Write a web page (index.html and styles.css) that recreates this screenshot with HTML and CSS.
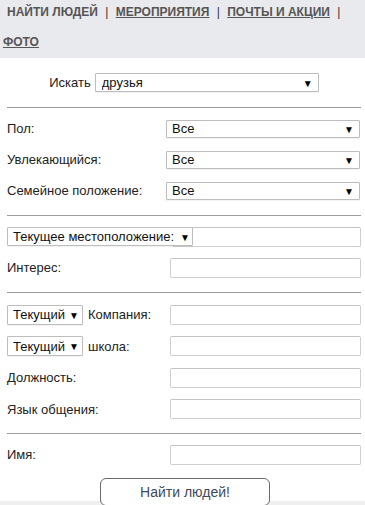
FILE: index.html
```
<!DOCTYPE html>
<html lang="ru">
<head>
    <meta charset="UTF-8">
    <meta name="viewport" content="width=device-width, initial-scale=1.0">
    <title>Найти людей</title>
    <link rel="stylesheet" href="styles.css">
</head>
<body>
    <header class="topnav">
        <nav class="topnav-links">
            <span class="current">Найти людей</span> <span class="sep">|</span> <a href="#">Мероприятия</a> <span class="sep">|</span> <a href="#">Почты и акции</a> <span class="sep">|</span> <a href="#">Фото</a>
        </nav>
    </header>
    <form class="search-form">
        <div class="search-row">
            <label for="what">Искать</label>
            <span class="select select-what">
                <select id="what">
                    <option>друзья</option>
                </select>
            </span>
        </div>

        <div class="rule rule-1"></div>

        <div class="section section-1">
            <div class="field">
                <label for="sex">Пол:</label>
                <span class="select select-wide"><select id="sex"><option>Все</option></select></span>
            </div>
            <div class="field">
                <label for="hobby">Увлекающийся:</label>
                <span class="select select-wide"><select id="hobby"><option>Все</option></select></span>
            </div>
            <div class="field">
                <label for="family">Семейное положение:</label>
                <span class="select select-wide"><select id="family"><option>Все</option></select></span>
            </div>
        </div>

        <div class="rule rule-2"></div>

        <div class="section section-2">
            <div class="field">
                <span class="select select-location"><select><option>Текущее местоположение:</option></select></span>
                <input type="text" class="text location-input">
            </div>
            <div class="field">
                <label for="interest">Интерес:</label>
                <input type="text" id="interest" class="text">
            </div>
        </div>

        <div class="rule rule-3"></div>

        <div class="section section-3">
            <div class="field">
                <span class="label-group">
                    <span class="select select-small"><select><option>Текущий</option></select></span>
                    <label for="company">Компания:</label>
                </span>
                <input type="text" id="company" class="text">
            </div>
            <div class="field">
                <span class="label-group">
                    <span class="select select-small"><select><option>Текущий</option></select></span>
                    <label for="school">школа:</label>
                </span>
                <input type="text" id="school" class="text">
            </div>
            <div class="field">
                <label for="position">Должность:</label>
                <input type="text" id="position" class="text">
            </div>
            <div class="field">
                <label for="lang">Язык общения:</label>
                <input type="text" id="lang" class="text">
            </div>
        </div>

        <div class="rule rule-4"></div>

        <div class="section section-4">
            <div class="field">
                <label for="name">Имя:</label>
                <input type="text" id="name" class="text">
            </div>
        </div>

        <div class="submit-row">
            <button type="button" class="submit-btn">Найти людей!</button>
        </div>
    </form>
    <footer class="page-footer"></footer>
</body>
</html>
```

FILE: styles.css
```
body {
    font-family: 'Liberation Sans', Arial, sans-serif;
    font-size: 13px;
    color: #222;
    background-color: #efefef;
    margin: 0;
    padding: 0;
    height: 505px;
    overflow: hidden;
}
.topnav {
    background-color: #e9eaed;
    height: 58px;
    padding-left: 3px;
}
.topnav-links {
    font-size: 12px;
    font-weight: 700;
    text-transform: uppercase;
    line-height: 30px;
    color: #555;
    position: relative;
    top: -3px;
}
.topnav-links .current {
    padding-left: 4px;
}
.topnav-links a {
    color: #555;
    text-decoration: underline;
}
.topnav-links .sep {
    margin: 0 4px;
    font-weight: 400;
    color: #333;
}
.search-form {
    background-color: #fff;
    width: 354px;
    padding: 0 4px 0 7px;
}
.search-row {
    display: flex;
    justify-content: center;
    align-items: center;
    gap: 4px;
    padding-top: 15px;
    height: 19px;
}
.rule {
    border-top: 1px solid #9c9c9c;
}
.rule-1 { margin-top: 15px; }
.rule-2 { margin-top: 9px; }
.rule-3 { margin-top: 9px; }
.rule-4 { margin-top: 8px; }
.section-1 { margin-top: 5px; }
.section-2 { margin-top: 5px; }
.section-3 { margin-top: 6px; }
.section-4 { margin-top: 5px; }
.field {
    display: flex;
    align-items: center;
    justify-content: space-between;
    height: 31px;
}
.section-3 .field {
    height: 31.5px;
}
.label-group {
    display: flex;
    align-items: center;
    gap: 5px;
}
.select {
    position: relative;
    display: inline-block;
    z-index: 1;
}
.select select {
    -webkit-appearance: none;
    appearance: none;
    font-family: 'Liberation Sans', Arial, sans-serif;
    font-size: 13px;
    color: #111;
    background-color: #fff;
    border: 1px solid #bdbdbd;
    border-radius: 1px;
    padding: 0 16px 0 5px;
    margin: 0;
    width: 100%;
    height: 100%;
    box-shadow: 0 1px 1px rgba(0, 0, 0, 0.06);
}
.select::after {
    content: "\25BC";
    position: absolute;
    right: 6px;
    top: 50%;
    transform: translateY(-50%);
    font-size: 10px;
    color: #000;
    pointer-events: none;
}
.select-what {
    width: 224px;
    height: 19px;
}
.select-what select {
    padding-left: 6px;
}
.select-wide {
    width: 194px;
    height: 18px;
    margin-right: 1px;
}
.select-location {
    width: 186px;
    height: 19px;
}
.select-location::after {
    right: 3px;
}
.select-small {
    width: 76px;
    height: 20px;
}
.select-small::after {
    right: 4px;
}
.text {
    width: 191px;
    height: 20px;
    box-sizing: border-box;
    border: 1px solid #cfcfcf;
    border-top-color: #c4c4c4;
    border-radius: 2px;
    background-color: #fff;
    margin: 0;
    padding: 0 4px;
    font-family: 'Liberation Sans', Arial, sans-serif;
    font-size: 13px;
}
.location-input {
    width: 189px;
    margin-left: -21px;
}
.submit-row {
    display: flex;
    justify-content: center;
    height: 23px;
    padding-top: 8px;
    padding-left: 2px;
}
.submit-btn {
    position: relative;
    z-index: 1;
    width: 170px;
    height: 28px;
    flex-shrink: 0;
    background-color: #fff;
    border: 1px solid #6a6a6a;
    border-radius: 6px;
    font-family: 'Liberation Sans', Arial, sans-serif;
    font-size: 14px;
    color: #3d4a5a;
    padding: 0;
}
.page-footer {
    background-color: #efefef;
    height: 6px;
}
```
